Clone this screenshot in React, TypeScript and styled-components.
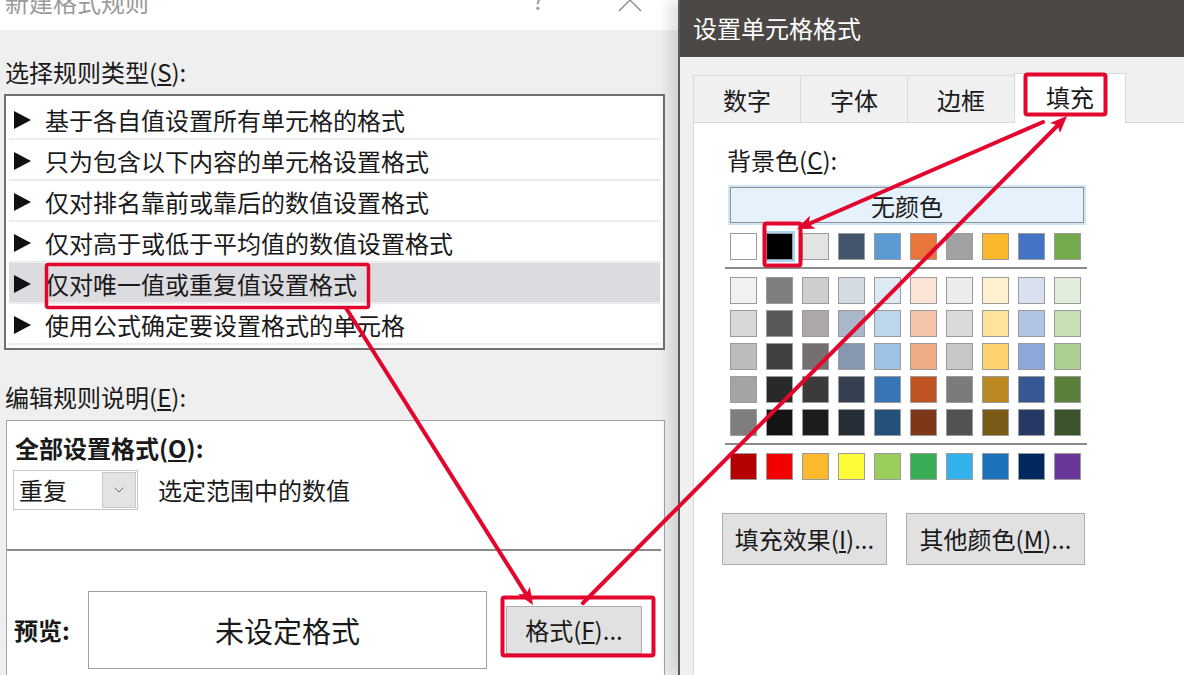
import React from "react";
import styled, { createGlobalStyle } from "styled-components";
import { ChevronDown } from "lucide-react";

const GlobalStyle = createGlobalStyle`
  html, body { margin: 0; padding: 0; }
  body {
    font-family: "Noto Sans CJK SC", "Noto Sans", sans-serif;
    background: #efefef;
    color: #1a1a1a;
  }
  #root { width: 1184px; height: 675px; overflow: hidden; }
  * { box-sizing: border-box; }
`;

const RED = "#e3052d";

const themeRow = ["#ffffff", "#000000", "#e3e3e3", "#44546a", "#5b9bd3", "#e8763a", "#a1a1a1", "#fbb82c", "#4472c4", "#74a94c"];

const tintRows = [
  ["#f1f1f1", "#7f7f7f", "#cfcdcd", "#d5dbe3", "#dde9f5", "#fbe3d6", "#ececec", "#fff1d0", "#d9e0f0", "#e2eddb"],
  ["#d8d8d8", "#595959", "#aba8a7", "#a9b7c8", "#bcd7ec", "#f4c5ab", "#dadada", "#ffe39c", "#b1c4e5", "#c7dfb5"],
  ["#bcbcbc", "#404040", "#75706f", "#8698b0", "#9cc2e4", "#f0ab87", "#c8c8c8", "#fdd36f", "#8da8d8", "#acce90"],
  ["#a4a4a4", "#292929", "#3c3a3a", "#343f4f", "#3776b4", "#c05322", "#7b7b7b", "#b98823", "#365791", "#5b803c"],
  ["#7e7e7e", "#141414", "#1c1c1c", "#252d36", "#245179", "#7f3719", "#525252", "#7a5b18", "#263964", "#3c542b"],
];

const standardRow = ["#b50000", "#f50000", "#fbb92d", "#fffb3a", "#9acd5b", "#38ad56", "#32b1ea", "#1b72bb", "#00275e", "#6a369a"];

const rules = [
  "基于各自值设置所有单元格的格式",
  "只为包含以下内容的单元格设置格式",
  "仅对排名靠前或靠后的数值设置格式",
  "仅对高于或低于平均值的数值设置格式",
  "仅对唯一值或重复值设置格式",
  "使用公式确定要设置格式的单元格",
];

const tabs = [
  { label: "数字", width: 108 },
  { label: "字体", width: 108 },
  { label: "边框", width: 108 },
  { label: "填充", width: 112, active: true },
];

const Page = styled.div`
  position: relative;
  width: 1184px;
  height: 675px;
  overflow: hidden;
  display: flex;
`;

/* ---------- left dialog ---------- */

const LeftDialog = styled.div`
  width: 678px;
  flex-shrink: 0;
  display: flex;
  flex-direction: column;
  background: #efefef;
`;

const TitleBar = styled.div`
  height: 30px;
  background: #ffffff;
  display: flex;
  align-items: flex-start;
  padding: 0 36px 0 5px;
  overflow: hidden;
  color: #9b9b9b;
`;

const TitleText = styled.span`
  font-size: 24px;
  line-height: 24px;
  margin-top: -10px;
`;

const HelpMark = styled.span`
  margin-left: auto;
  margin-right: 74px;
  font-size: 24px;
  line-height: 24px;
  margin-top: -12px;
`;

const CloseGlyph = styled.svg`
  margin-top: -12px;
`;

const LeftBody = styled.div`
  flex: 1;
  display: flex;
  flex-direction: column;
  padding: 27px 13px 0 4px;
`;

const SectionLabel = styled.div<{ $gap?: number }>`
  font-size: 24px;
  line-height: 30px;
  padding-left: 1px;
  margin-top: ${(p) => p.$gap ?? 0}px;
  color: #1a1a1a;
`;

const ListBox = styled.div`
  margin-top: 7px;
  border: 2px solid #6f6f6f;
  background: #ffffff;
  padding: 3px 3px;
`;

const RuleRow = styled.div<{ $selected?: boolean }>`
  height: 41px;
  display: flex;
  align-items: center;
  padding: 3px 0 0 5px;
  border-bottom: 2px solid #ededed;
  background: ${(p) => (p.$selected ? "#dcdce0" : "#ffffff")};
`;

const Triangle = styled.span`
  width: 0;
  height: 0;
  border-left: 17px solid #111;
  border-top: 9px solid transparent;
  border-bottom: 9px solid transparent;
  margin-right: 14px;
`;

const RuleText = styled.span`
  font-size: 24px;
  line-height: 30px;
`;

const DescriptionBox = styled.div`
  flex: 1;
  margin: 8px 0 0 2px;
  background: #ffffff;
  border: 1px solid #a3a3a3;
  border-bottom: none;
  padding: 12px 3px 0 8px;
  display: flex;
  flex-direction: column;
`;

const BoldLabel = styled.div`
  font-size: 24px;
  line-height: 30px;
  font-weight: 700;
`;

const SelectRow = styled.div`
  display: flex;
  align-items: center;
  gap: 20px;
  margin: 7px 0 0 -2px;
`;

const Select = styled.div`
  width: 125px;
  height: 40px;
  border: 1px solid #c4c4c4;
  background: #ffffff;
  display: flex;
  align-items: center;
  padding: 1px;
  font-size: 24px;
`;

const SelectValue = styled.span`
  padding-left: 4px;
  line-height: 30px;
`;

const DropButton = styled.span`
  margin-left: auto;
  width: 34px;
  height: 100%;
  background: #e3e3e3;
  border: 1px solid #c8c8c8;
  display: flex;
  align-items: center;
  justify-content: center;
  color: #555;
`;

const PlainText = styled.span`
  font-size: 24px;
  line-height: 30px;
`;

const Divider = styled.div`
  height: 2px;
  background: #8a8a8a;
  margin: 39px 0 0 -8px;
`;

const PreviewRow = styled.div`
  display: flex;
  align-items: center;
  margin: 40px 0 0 -1px;
`;

const PreviewLabel = styled(BoldLabel)`
  width: 74px;
`;

const PreviewBox = styled.div`
  width: 399px;
  height: 78px;
  border: 1px solid #a0a0a0;
  display: flex;
  align-items: center;
  justify-content: center;
  font-size: 29px;
`;

const DialogButton = styled.div<{ $width: number; $height: number }>`
  width: ${(p) => p.$width}px;
  height: ${(p) => p.$height}px;
  background: #e1e1e1;
  border: 1px solid #adadad;
  display: flex;
  align-items: center;
  justify-content: center;
  font-size: 24px;
  line-height: 30px;
  color: #1a1a1a;
`;

const FormatButton = styled(DialogButton)`
  margin-left: 19px;
`;

/* ---------- right dialog ---------- */

const RightDialog = styled.div`
  position: relative;
  flex: 1;
  display: flex;
  flex-direction: column;
  background: #f0f0f0;
  border-left: 2px solid #5a5a5a;
  box-shadow: -8px 0 14px rgba(0, 0, 0, 0.13);
`;

const RightTitle = styled.div`
  height: 57px;
  background: #4b4845;
  color: #ffffff;
  font-size: 24px;
  display: flex;
  align-items: center;
  padding: 0 0 2px 13px;
`;

const RightBody = styled.div`
  flex: 1;
  display: flex;
  flex-direction: column;
  padding: 16px 0 0 13px;
`;

const TabStrip = styled.div`
  display: flex;
  align-items: flex-end;
  height: 49px;
`;

const Tab = styled.div<{ $active?: boolean; $width: number }>`
  position: relative;
  z-index: ${(p) => (p.$active ? 1 : 0)};
  width: ${(p) => p.$width}px;
  height: ${(p) => (p.$active ? 50 : 47)}px;
  margin-right: -1px;
  margin-bottom: ${(p) => (p.$active ? -1 : 0)}px;
  background: ${(p) => (p.$active ? "#ffffff" : "#f0f0f0")};
  border: 1px solid #d9d9d9;
  border-bottom: none;
  display: flex;
  align-items: center;
  justify-content: center;
  padding-bottom: ${(p) => (p.$active ? 4 : 0)}px;
  font-size: 24px;
`;

const Panel = styled.div`
  flex: 1;
  background: #ffffff;
  border: 1px solid #d9d9d9;
  border-right: none;
  border-bottom: none;
  padding: 22px 0 0 32px;
  display: flex;
  flex-direction: column;
`;

const NoColorButton = styled.div`
  width: 354px;
  height: 36px;
  margin: 12px 0 0 4px;
  background: #e5f1fb;
  border: 1px solid #8f8f8f;
  box-shadow: 0 0 0 2px #cfe6f8;
  display: flex;
  align-items: center;
  justify-content: center;
  font-size: 24px;
`;

const SwatchGrid = styled.div<{ $top: number }>`
  display: grid;
  grid-template-columns: repeat(10, 27px);
  column-gap: 9px;
  row-gap: 6px;
  margin: ${(p) => p.$top}px 0 0 4px;
`;

const Swatch = styled.div<{ $color: string; $picked?: boolean }>`
  width: 27px;
  height: 27px;
  background: ${(p) => p.$color};
  border: 1px solid #9b9b9b;
  box-shadow: ${(p) => (p.$picked ? "0 0 0 2px #a9d6f7" : "none")};
`;

const PaletteRule = styled.div`
  width: 362px;
  height: 2px;
  background: #8a8a8a;
  margin: 7px 0 0 -1px;
`;

const ButtonRow = styled.div`
  display: flex;
  gap: 19px;
  margin: 33px 0 0 -4px;
`;

/* ---------- annotation overlay ---------- */

const Overlay = styled.svg`
  position: absolute;
  left: 0;
  top: 0;
  pointer-events: none;
  z-index: 10;
`;

type Pt = [number, number];

function Arrow({ from, to }: { from: Pt; to: Pt }) {
  const [x1, y1] = from;
  const [x2, y2] = to;
  const len = Math.hypot(x2 - x1, y2 - y1);
  const ux = (x2 - x1) / len;
  const uy = (y2 - y1) / len;
  const head = 17;
  const half = 7;
  const bx = x2 - ux * head;
  const by = y2 - uy * head;
  const pts = [
    `${x2},${y2}`,
    `${bx - uy * half},${by + ux * half}`,
    `${bx + ux * 4},${by + uy * 4}`,
    `${bx + uy * half},${by - ux * half}`,
  ].join(" ");
  return (
    <g>
      <line x1={x1} y1={y1} x2={bx + ux * 5} y2={by + uy * 5} stroke={RED} strokeWidth={4} strokeLinecap="round" />
      <polygon points={pts} fill={RED} />
    </g>
  );
}

function Annotations() {
  return (
    <Overlay width={1184} height={675} viewBox="0 0 1184 675">
      <rect x={46.5} y={264.5} width={322} height={43} rx={2} fill="none" stroke={RED} strokeWidth={3.5} />
      <rect x={1025.5} y={74.5} width={80} height={40} rx={2} fill="none" stroke={RED} strokeWidth={4} />
      <rect x={764.5} y={223.5} width={36} height={42} rx={2} fill="none" stroke={RED} strokeWidth={4} />
      <rect x={502.5} y={597.5} width={151} height={58} rx={2} fill="none" stroke={RED} strokeWidth={4} />
      <Arrow from={[346, 308]} to={[533, 605]} />
      <Arrow from={[583, 603]} to={[1067, 116]} />
      <Arrow from={[1043, 122]} to={[797, 229]} />
    </Overlay>
  );
}

export default function App() {
  return (
    <>
      <GlobalStyle />
      <Page>
        <LeftDialog>
          <TitleBar>
            <TitleText>新建格式规则</TitleText>
            <HelpMark>?</HelpMark>
            <CloseGlyph width={24} height={24} viewBox="0 0 24 24">
              <path d="M1 1 L23 23 M23 1 L1 23" stroke="#8a8a8a" strokeWidth={1.4} fill="none" />
            </CloseGlyph>
          </TitleBar>
          <LeftBody>
            <SectionLabel>
              选择规则类型(<u>S</u>):
            </SectionLabel>
            <ListBox>
              {rules.map((r, i) => (
                <RuleRow key={r} $selected={i === 4}>
                  <Triangle />
                  <RuleText>{r}</RuleText>
                </RuleRow>
              ))}
            </ListBox>
            <SectionLabel $gap={32}>
              编辑规则说明(<u>E</u>):
            </SectionLabel>
            <DescriptionBox>
              <BoldLabel>
                全部设置格式(<u>O</u>):
              </BoldLabel>
              <SelectRow>
                <Select>
                  <SelectValue>重复</SelectValue>
                  <DropButton>
                    <ChevronDown size={16} strokeWidth={1.3} />
                  </DropButton>
                </Select>
                <PlainText>选定范围中的数值</PlainText>
              </SelectRow>
              <Divider />
              <PreviewRow>
                <PreviewLabel>预览:</PreviewLabel>
                <PreviewBox>未设定格式</PreviewBox>
                <FormatButton $width={136} $height={48}>
                  格式(<u>F</u>)...
                </FormatButton>
              </PreviewRow>
            </DescriptionBox>
          </LeftBody>
        </LeftDialog>

        <RightDialog>
          <RightTitle>设置单元格格式</RightTitle>
          <RightBody>
            <TabStrip>
              {tabs.map((t) => (
                <Tab key={t.label} $active={t.active} $width={t.width}>
                  {t.label}
                </Tab>
              ))}
            </TabStrip>
            <Panel>
              <SectionLabel>
                背景色(<u>C</u>):
              </SectionLabel>
              <NoColorButton>无颜色</NoColorButton>
              <SwatchGrid $top={10}>
                {themeRow.map((c, i) => (
                  <Swatch key={i} $color={c} $picked={i === 1} />
                ))}
              </SwatchGrid>
              <PaletteRule />
              <SwatchGrid $top={8}>
                {tintRows.flat().map((c, i) => (
                  <Swatch key={i} $color={c} />
                ))}
              </SwatchGrid>
              <PaletteRule />
              <SwatchGrid $top={8}>
                {standardRow.map((c, i) => (
                  <Swatch key={i} $color={c} />
                ))}
              </SwatchGrid>
              <ButtonRow>
                <DialogButton $width={165} $height={52}>
                  填充效果(<u>I</u>)...
                </DialogButton>
                <DialogButton $width={179} $height={52}>
                  其他颜色(<u>M</u>)...
                </DialogButton>
              </ButtonRow>
            </Panel>
          </RightBody>
        </RightDialog>

        <Annotations />
      </Page>
    </>
  );
}
